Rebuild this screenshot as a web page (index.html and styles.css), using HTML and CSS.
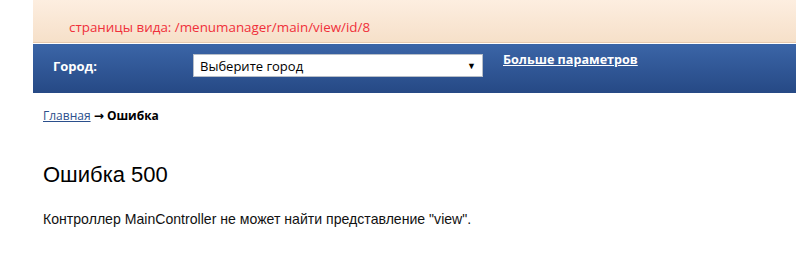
FILE: index.html
```html
<!DOCTYPE html>
<html lang="ru">
<head>
  <meta charset="UTF-8">
  <title>Ошибка 500</title>
  <link rel="stylesheet" href="styles.css">
</head>
<body>
  <div class="page">
    <!-- отладочная плашка -->
    <div class="debug-bar">
      <span class="debug-text">страницы вида: /menumanager/main/view/id/8</span>
    </div>

    <!-- фильтр по городу -->
    <div class="city-bar">
      <label class="city-label">Город:</label>
      <div class="city-select">
        <span>Выберите город</span>
        <span class="arrow">▼</span>
      </div>
      <a href="#" class="more-link">Больше параметров</a>
    </div>

    <div class="content">
      <div class="breadcrumbs">
        <a href="#">Главная</a> <span class="sep">→</span> <b>Ошибка</b>
      </div>

      <h1 class="error-title">Ошибка 500</h1>
      <p class="error-text">Контроллер MainController не может найти представление "view".</p>
    </div>
  </div>
</body>
</html>
```

FILE: styles.css
```css
* {
  margin: 0;
  padding: 0;
  box-sizing: border-box;
}

body {
  background: #fff;
  font-family: 'Open Sans', 'Liberation Sans', sans-serif;
}

.page {
  margin-left: 33px;
}

/* отладка */
.debug-bar {
  height: 43px;
  background: linear-gradient(#fdeee0, #f6e0c9);
  border-bottom: 1px solid #e6c9ae;
  box-shadow: 0 1px 0 #fff;
  padding: 15px 0 0 36px;
}

.debug-text {
  color: #f0303a;
  font-size: 13.4px;
}

/* городская панель */
.city-bar {
  margin-top: 1px;
  height: 49px;
  background: linear-gradient(#3b65a7, #264985);
  display: flex;
  align-items: flex-start;
  padding-left: 20px;
}

.city-label {
  color: #fff;
  font-weight: bold;
  font-size: 13px;
  margin-top: 13px;
  width: 140px;
}

.city-select {
  margin-top: 10px;
  width: 290px;
  height: 23px;
  background: #fff;
  border: 1px solid #b7bec8;
  display: flex;
  justify-content: space-between;
  align-items: center;
  padding: 0 6px 0 6px;
  font-size: 13px;
  color: #000;
}

.city-select .arrow {
  font-size: 9px;
}

.more-link {
  margin: 7px 0 0 20px;
  color: #fff;
  font-weight: bold;
  font-size: 12.6px;
}

/* контент */
.content {
  padding: 14px 10px;
}

.breadcrumbs {
  font-size: 12px;
  color: #000;
  font-family: 'Open Sans', sans-serif;
}

.breadcrumbs a {
  color: #2b4f8c;
}

.breadcrumbs .sep {
  font-family: 'DejaVu Sans', sans-serif;
  font-weight: bold;
  font-size: 12px;
}

.error-title {
  font-family: 'Liberation Sans', Arial, sans-serif;
  font-weight: normal;
  font-size: 22px;
  margin-top: 38px;
  color: #000;
}

.error-text {
  font-family: 'Liberation Sans', Arial, sans-serif;
  font-size: 14.1px;
  margin-top: 23px;
  color: #111;
}
```
